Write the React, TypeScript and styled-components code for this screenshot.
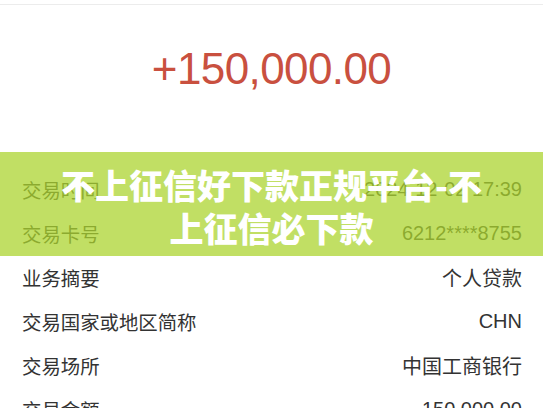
import React from 'react';
import styled, { createGlobalStyle } from 'styled-components';

const rows = [
    { label: '交易时间', value: '2024-12-02 17:39' },
    { label: '交易卡号', value: '6212****8755' },
    { label: '业务摘要', value: '个人贷款' },
    { label: '交易国家或地区简称', value: 'CHN' },
    { label: '交易场所', value: '中国工商银行' },
    { label: '交易金额', value: '150,000.00' },
];

const App = () => {
    return (
        <>
            <GlobalStyle />
            <Page>
                <TopBar />
                <Amount>+150,000.00</Amount>
                <Details>
                    {rows.map((row) => (
                        <Row key={row.label}>
                            <Label>{row.label}</Label>
                            <Value>{row.value}</Value>
                        </Row>
                    ))}
                </Details>
                <Banner>
                    <Title>不上征信好下款正规平台-不上征信必下款</Title>
                </Banner>
            </Page>
        </>
    )
}

const GlobalStyle = createGlobalStyle`
    html, body {
        margin: 0;
        padding: 0;
        background: #fff;
        overflow: hidden;
    }
    body {
        font-family: "Liberation Sans", "Noto Sans CJK SC", sans-serif;
    }
`;

const Page = styled.div`
    position: relative;
    width: 543px;
    height: 408px;
    overflow: hidden;
    background: #fff;
`;

const TopBar = styled.div`
    height: 4px;
    border-bottom: 1px solid #ececec;
`;

const Amount = styled.div`
    height: 162px;
    box-sizing: border-box;
    padding-top: 35px;
    text-align: center;
    font-size: 44px;
    line-height: 58px;
    letter-spacing: -0.6px;
    color: #c9503f;
`;

const Details = styled.div`
    display: flex;
    flex-direction: column;
    padding: 0 21px 0 22px;
`;

const Row = styled.div`
    display: flex;
    align-items: center;
    justify-content: space-between;
    height: 44px;
    color: #333;
`;

const Label = styled.span`
    font-family: "Noto Sans CJK SC", sans-serif;
    font-size: 19.4px;
`;

const Value = styled.span`
    font-family: "Liberation Sans", "Noto Sans CJK SC", sans-serif;
    font-size: 20px;
`;

const Banner = styled.div`
    position: absolute;
    left: 0;
    right: 0;
    top: 152px;
    height: 104px;
    display: flex;
    align-items: center;
    justify-content: center;
    background: rgba(172, 212, 46, 0.74);
`;

const Title = styled.div`
    width: 430px;
    padding-top: 4px;
    text-align: center;
    font-family: "Noto Sans CJK SC", sans-serif;
    font-weight: 900;
    font-size: 34px;
    line-height: 43px;
    color: #fff;
`;

export default App
